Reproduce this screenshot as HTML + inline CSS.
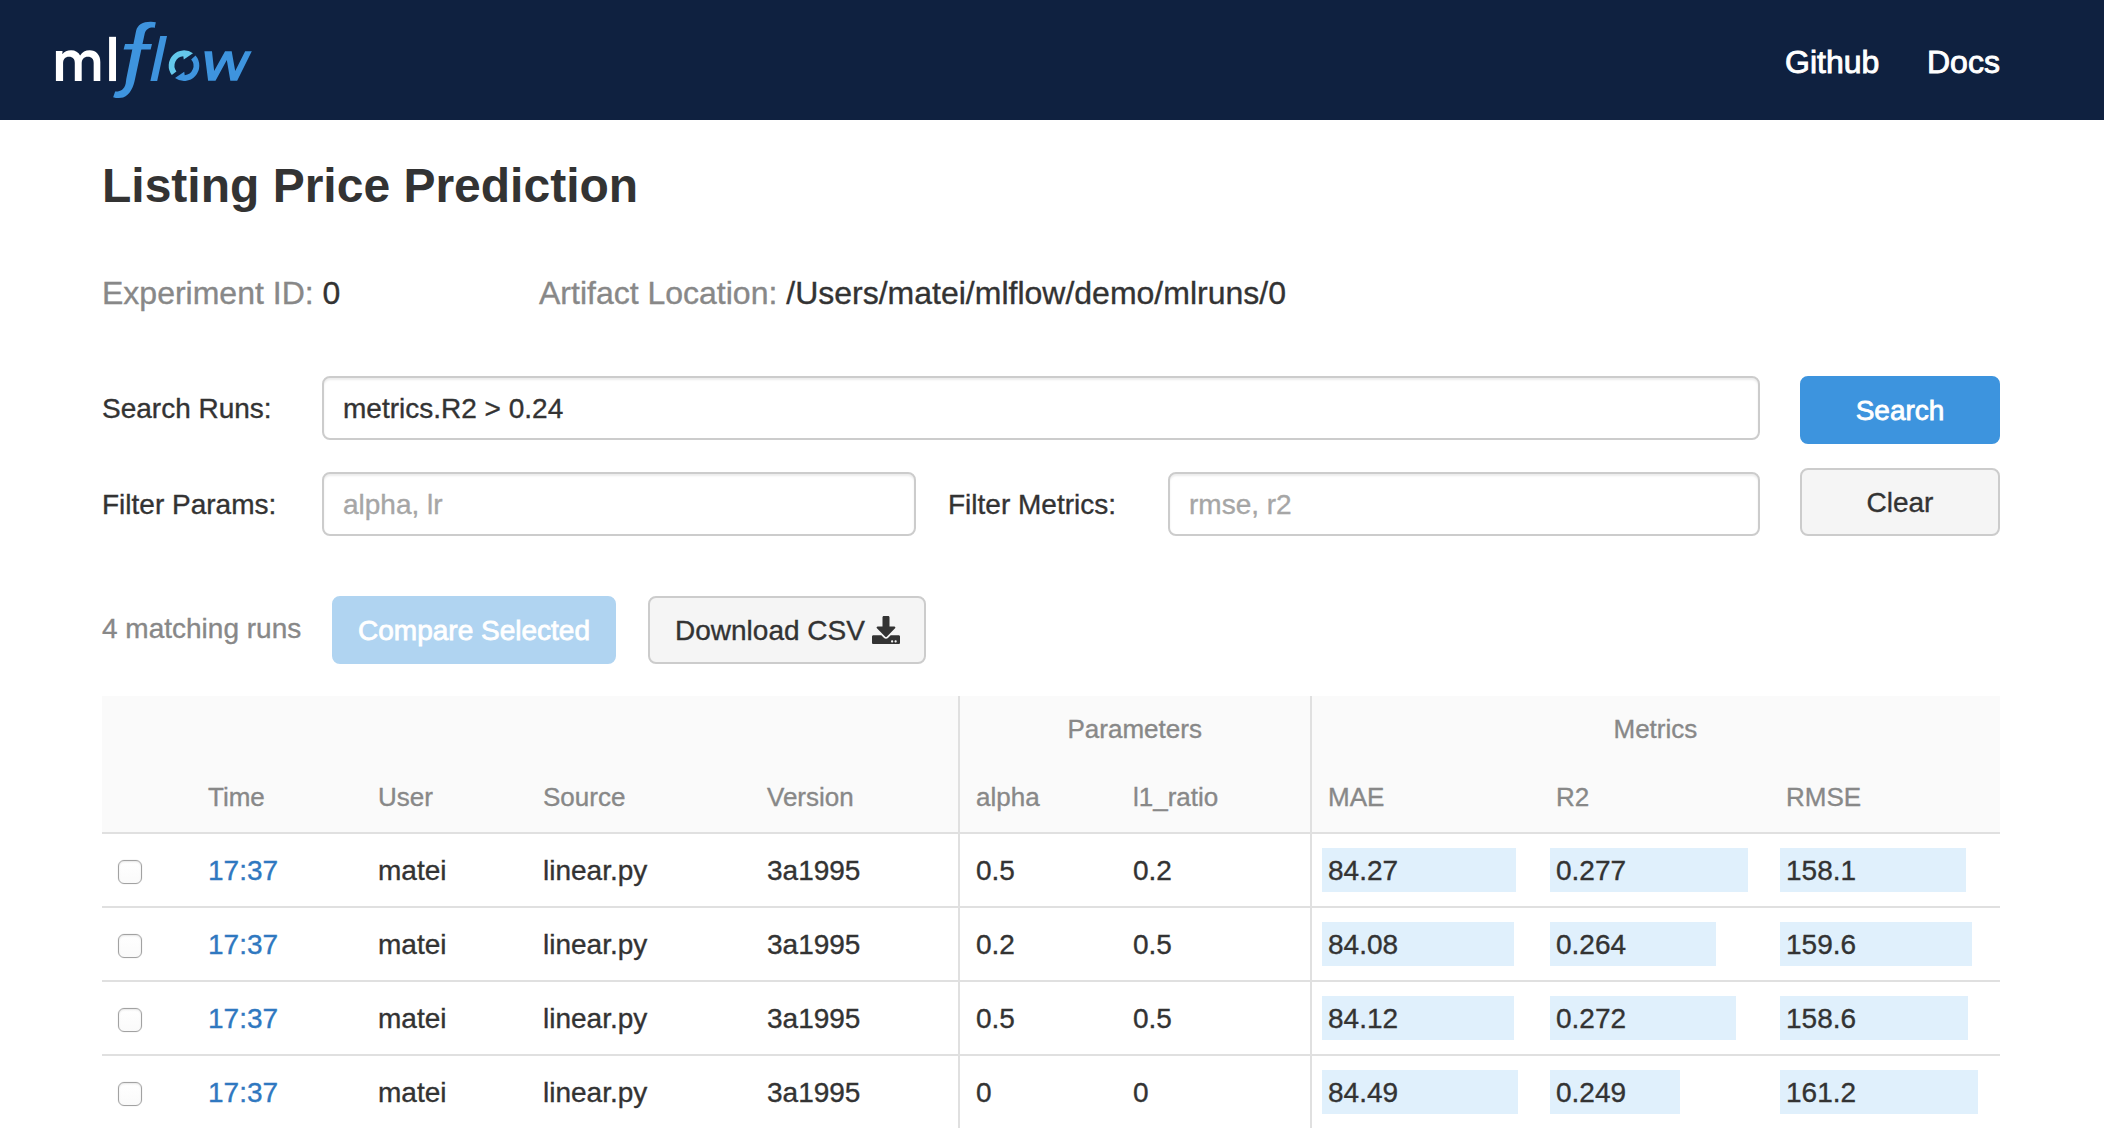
<!DOCTYPE html>
<html>
<head>
<meta charset="utf-8">
<title>MLflow</title>
<style>
html,body{margin:0;padding:0;}
body{width:2104px;height:1128px;overflow:hidden;background:#fff;position:relative;
  font-family:"Liberation Sans",sans-serif;color:#333;font-size:28px;-webkit-text-stroke:0.35px;}
.abs{position:absolute;white-space:nowrap;}
#hdr{position:absolute;left:0;top:0;width:2104px;height:120px;background:#0f2140;}
.nav{position:absolute;top:42px;height:40px;line-height:40px;font-size:32px;color:#fff;white-space:nowrap;-webkit-text-stroke:0.9px #fff;}
h1{position:absolute;left:102px;top:156px;-webkit-text-stroke:0;margin:0;font-size:48px;line-height:60px;font-weight:bold;color:#333;white-space:nowrap;}
.meta{position:absolute;top:273px;height:40px;line-height:40px;font-size:32px;color:#888;white-space:nowrap;}
.meta b{font-weight:normal;color:#333;}
.lbl{position:absolute;height:40px;line-height:40px;font-size:28px;color:#333;white-space:nowrap;}
.inp{position:absolute;box-sizing:border-box;border:2px solid #ccc;border-radius:8px;background:#fff;
  box-shadow:inset 0 2px 2px rgba(0,0,0,.075);font-size:28px;line-height:62px;height:64px;padding-left:19px;color:#333;white-space:nowrap;}
.inp.ph{color:#a6a6a6;}
.btn{position:absolute;box-sizing:border-box;height:68px;border-radius:8px;text-align:center;font-size:28px;line-height:66px;white-space:nowrap;border:2px solid transparent;}
.btn.pri{background:#3d94de;border-color:#3d94de;color:#fff;-webkit-text-stroke:0.8px #fff;}
.btn.dis{background:#b0d4f1;border-color:#b0d4f1;color:#fff;-webkit-text-stroke:0.8px #fff;}
.btn.def{background:#f5f5f5;border-color:#ccc;color:#333;}
#thead{position:absolute;left:102px;top:696px;width:1898px;height:136px;background:#fafafa;}
.hl{position:absolute;left:102px;width:1898px;height:2px;background:#e0e0e0;}
.vl{position:absolute;top:696px;width:2px;height:432px;background:#e0e0e0;}
.th{position:absolute;height:32px;line-height:32px;font-size:26px;color:#888;white-space:nowrap;}
.td{position:absolute;height:40px;line-height:40px;font-size:28px;color:#333;white-space:nowrap;}
.td.a{color:#2f78c0;}
.bar{position:absolute;height:44px;background:#e0f0fc;}
.cb{position:absolute;left:118px;width:24px;height:24px;box-sizing:border-box;border:1.500px solid #a2a2a2;border-radius:6px;
  background:linear-gradient(#fff,#fafafa);box-shadow:inset 0 1px 2px rgba(0,0,0,.10),0 0 0 0.500px rgba(0,0,0,.06);}
</style>
</head>
<body>
<div id="hdr">
  <svg class="abs" style="left:0;top:0" width="300" height="120" viewBox="0 0 300 120">
    <g transform="translate(40,10) scale(0.10931)">
      <path d="M778 310 L1025 310 L1012 362 L765 362 Z" fill="#3e94de"/>
      <path d="M1100 238 L1162 238 L1072 650 L1010 650 Z" fill="#3e94de"/>
    </g>
    <g transform="translate(45,30) scale(0.053191)" fill="#fff">
      <path d="M205 960 L205 395 L330 395 L325 455 C360 405 420 382 490 382 C570 382 630 420 660 480 C700 415 760 382 840 382 C960 382 1040 470 1040 600 L1040 960 L915 960 L915 620 C915 550 880 505 805 505 C735 505 690 550 690 630 L690 960 L560 960 L560 620 C560 550 525 505 450 505 C380 505 340 550 340 630 L340 960 Z"/>
      <rect x="1205" y="128" width="130" height="832"/>
    </g>
    <g transform="translate(100,15) scale(0.07976)">
      <path d="M700 90 L685 162 C640 150 580 165 560 235 L440 800 C420 900 380 1000 290 1035 C250 1045 200 1042 165 1030 L190 960 C250 965 305 940 322 860 L330 800 L452 200 C470 120 540 82 640 84 Z" fill="#3e94de"/>
    </g>
    <g transform="translate(160,40) scale(0.047529)">
      <path id="arc" d="M247.800 733.800 A322 322 0 0 1 694.300 279.500 L500 410 L490 340.600 A200 200 0 0 0 345.300 660.400 Z" fill="#64c8eb"/>
      <path d="M748 328.700 A322 322 0 0 1 315.700 800.500 L510 670 L520 739.400 A200 200 0 0 0 655.900 408.800 Z" fill="#3e94de"/>
    </g>
    <path d="M204.390 51.220 L211.990 51.220 L214.140 70.920 L225.060 51.220 L231.700 51.220 L235.210 70.920 L245.160 51.220 L251.790 51.220 L237.160 80.870 L230.330 80.870 L226.820 60 L215.510 80.870 L208.090 80.870 Z" fill="#3e94de"/>
  </svg>
  <div class="nav" style="left:1785px">Github</div>
  <div class="nav" style="left:1927px">Docs</div>
</div>

<h1>Listing Price Prediction</h1>
<div class="meta" style="left:102px">Experiment ID: <b>0</b></div>
<div class="meta" style="left:539px">Artifact Location: <b>/Users/matei/mlflow/demo/mlruns/0</b></div>

<div class="lbl" style="left:102px;top:389px">Search Runs:</div>
<div class="inp" style="left:322px;top:376px;width:1438px">metrics.R2 &gt; 0.24</div>
<div class="btn pri" style="left:1800px;top:376px;width:200px">Search</div>

<div class="lbl" style="left:102px;top:485px">Filter Params:</div>
<div class="inp ph" style="left:322px;top:472px;width:594px">alpha, lr</div>
<div class="lbl" style="left:948px;top:485px">Filter Metrics:</div>
<div class="inp ph" style="left:1168px;top:472px;width:592px">rmse, r2</div>
<div class="btn def" style="left:1800px;top:468px;width:200px">Clear</div>

<div class="lbl" style="left:102px;top:609px;color:#888">4 matching runs</div>
<div class="btn dis" style="left:332px;top:596px;width:284px">Compare Selected</div>
<div class="btn def" style="left:648px;top:596px;width:278px;text-align:left;padding-left:25px">Download CSV
  <svg style="position:absolute;left:222px;top:17.500px" width="28" height="28" viewBox="0 0 512 512"><path fill="#333" d="M216 0h80c13.300 0 24 10.700 24 24v168h87.700c17.800 0 26.700 21.500 14.100 34.100L269.700 378.300c-7.500 7.500-19.800 7.500-27.300 0L90.100 226.100c-12.600-12.600-3.700-34.100 14.100-34.100H192V24c0-13.300 10.700-24 24-24zm296 376v112c0 13.300-10.700 24-24 24H24c-13.300 0-24-10.700-24-24V376c0-13.300 10.700-24 24-24h146.700l49 49c20.100 20.100 52.500 20.100 72.600 0l49-49H488c13.300 0 24 10.700 24 24zm-124 88c0-11-9-20-20-20s-20 9-20 20 9 20 20 20 20-9 20-20zm64 0c0-11-9-20-20-20s-20 9-20 20 9 20 20 20 20-9 20-20z"/></svg>
</div>

<div id="thead"></div>
<div class="hl" style="top:832px"></div>
<div class="hl" style="top:906px"></div>
<div class="hl" style="top:980px"></div>
<div class="hl" style="top:1054px"></div>
<div class="vl" style="left:958px"></div>
<div class="vl" style="left:1310px"></div>

<div class="th" style="left:1067.500px;top:713px">Parameters</div>
<div class="th" style="left:1613.500px;top:713px">Metrics</div>
<div class="th" style="left:208px;top:781px">Time</div>
<div class="th" style="left:378px;top:781px">User</div>
<div class="th" style="left:543px;top:781px">Source</div>
<div class="th" style="left:767px;top:781px">Version</div>
<div class="th" style="left:976px;top:781px">alpha</div>
<div class="th" style="left:1133px;top:781px">l1_ratio</div>
<div class="th" style="left:1328px;top:781px">MAE</div>
<div class="th" style="left:1556px;top:781px">R2</div>
<div class="th" style="left:1786px;top:781px">RMSE</div>

<!-- row 1 -->
<div class="cb" style="top:860px"></div>
<div class="td a" style="left:208px;top:851px">17:37</div>
<div class="td" style="left:378px;top:851px">matei</div>
<div class="td" style="left:543px;top:851px">linear.py</div>
<div class="td" style="left:767px;top:851px">3a1995</div>
<div class="td" style="left:976px;top:851px">0.5</div>
<div class="td" style="left:1133px;top:851px">0.2</div>
<div class="bar" style="left:1322px;top:848px;width:194px"></div>
<div class="bar" style="left:1550px;top:848px;width:198px"></div>
<div class="bar" style="left:1780px;top:848px;width:186px"></div>
<div class="td" style="left:1328px;top:851px">84.27</div>
<div class="td" style="left:1556px;top:851px">0.277</div>
<div class="td" style="left:1786px;top:851px">158.1</div>

<!-- row 2 -->
<div class="cb" style="top:934px"></div>
<div class="td a" style="left:208px;top:925px">17:37</div>
<div class="td" style="left:378px;top:925px">matei</div>
<div class="td" style="left:543px;top:925px">linear.py</div>
<div class="td" style="left:767px;top:925px">3a1995</div>
<div class="td" style="left:976px;top:925px">0.2</div>
<div class="td" style="left:1133px;top:925px">0.5</div>
<div class="bar" style="left:1322px;top:922px;width:192px"></div>
<div class="bar" style="left:1550px;top:922px;width:166px"></div>
<div class="bar" style="left:1780px;top:922px;width:192px"></div>
<div class="td" style="left:1328px;top:925px">84.08</div>
<div class="td" style="left:1556px;top:925px">0.264</div>
<div class="td" style="left:1786px;top:925px">159.6</div>

<!-- row 3 -->
<div class="cb" style="top:1008px"></div>
<div class="td a" style="left:208px;top:999px">17:37</div>
<div class="td" style="left:378px;top:999px">matei</div>
<div class="td" style="left:543px;top:999px">linear.py</div>
<div class="td" style="left:767px;top:999px">3a1995</div>
<div class="td" style="left:976px;top:999px">0.5</div>
<div class="td" style="left:1133px;top:999px">0.5</div>
<div class="bar" style="left:1322px;top:996px;width:192px"></div>
<div class="bar" style="left:1550px;top:996px;width:186px"></div>
<div class="bar" style="left:1780px;top:996px;width:188px"></div>
<div class="td" style="left:1328px;top:999px">84.12</div>
<div class="td" style="left:1556px;top:999px">0.272</div>
<div class="td" style="left:1786px;top:999px">158.6</div>

<!-- row 4 -->
<div class="cb" style="top:1082px"></div>
<div class="td a" style="left:208px;top:1073px">17:37</div>
<div class="td" style="left:378px;top:1073px">matei</div>
<div class="td" style="left:543px;top:1073px">linear.py</div>
<div class="td" style="left:767px;top:1073px">3a1995</div>
<div class="td" style="left:976px;top:1073px">0</div>
<div class="td" style="left:1133px;top:1073px">0</div>
<div class="bar" style="left:1322px;top:1070px;width:196px"></div>
<div class="bar" style="left:1550px;top:1070px;width:130px"></div>
<div class="bar" style="left:1780px;top:1070px;width:198px"></div>
<div class="td" style="left:1328px;top:1073px">84.49</div>
<div class="td" style="left:1556px;top:1073px">0.249</div>
<div class="td" style="left:1786px;top:1073px">161.2</div>
</body>
</html>
